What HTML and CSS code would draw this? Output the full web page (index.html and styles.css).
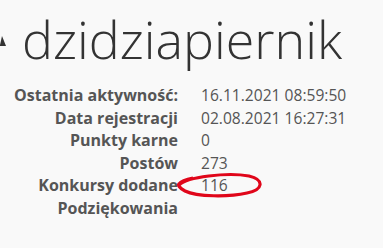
FILE: index.html
```html
<!DOCTYPE html>
<html lang="pl">
<head>
<meta charset="utf-8">
<link rel="stylesheet" href="styles.css">
</head>
<body>
<div class="page">
  <h1 class="title"><svg class="icon" width="6" height="12" viewBox="0 0 6 12"><polygon points="0,10 2,1 6,11 0,11" fill="#333"/></svg><span>dzidziapiernik</span></h1>
  <div class="stats">
    <div class="label">Ostatnia aktywność:</div><div class="value">16.11.2021 08:59:50</div>
    <div class="label">Data rejestracji</div><div class="value">02.08.2021 16:27:31</div>
    <div class="label">Punkty karne</div><div class="value">0</div>
    <div class="label">Postów</div><div class="value">273</div>
    <div class="label">Konkursy dodane</div><div class="value marked">116<svg class="circle" width="86" height="26" viewBox="0 0 86 26"><path d="M2 13 C 10 5, 50 0, 72 4 C 88 8, 86 18, 70 21 C 52 25, 20 25, 8 19 C 2 16, 1 13, 2 12 C 4 9, 10 7, 16 6" fill="none" stroke="#e0061a" stroke-width="3.2"/></svg></div>
    <div class="label">Podziękowania</div><div class="value"></div>
  </div>
</div>
</body>
</html>
```
FILE: styles.css
```css
html, body { margin: 0; padding: 0; }
body { background: #f9f9f9; font-family: "Open Sans", sans-serif; color: #555; width: 383px; height: 248px; overflow: hidden; }
.page { padding: 7px 0 0 0; }
.title { margin: 0; display: flex; align-items: center; gap: 16px; font-weight: 300; font-size: 52px; line-height: 64px; color: #333; letter-spacing: 0; }
.icon { flex: none; margin-top: 4px; }
.stats { display: grid; grid-template-columns: 178px auto; column-gap: 23px; margin-top: 13px; line-height: 22.5px; }
.label { text-align: right; font-weight: 700; color: #555; font-size: 16px; }
.value { color: #555; font-size: 15.6px; }
.marked { position: relative; }
.circle { position: absolute; left: -24px; top: -2px; }
```
